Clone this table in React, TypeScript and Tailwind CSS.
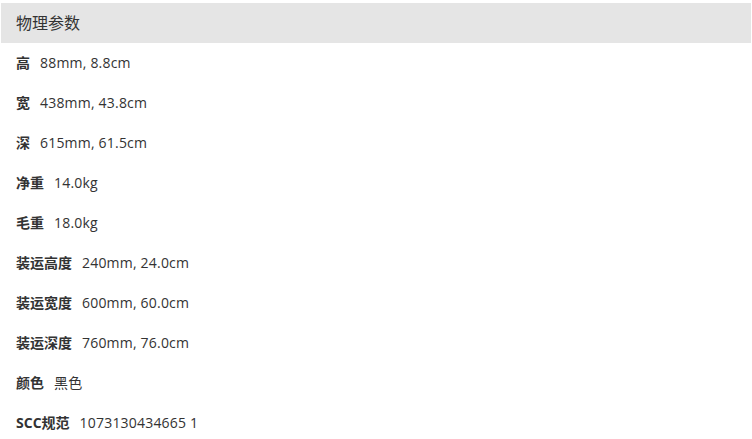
const specs: [string, string][] = [
  ["高", "88mm, 8.8cm"],
  ["宽", "438mm, 43.8cm"],
  ["深", "615mm, 61.5cm"],
  ["净重", "14.0kg"],
  ["毛重", "18.0kg"],
  ["装运高度", "240mm, 24.0cm"],
  ["装运宽度", "600mm, 60.0cm"],
  ["装运深度", "760mm, 76.0cm"],
  ["颜色", "黑色"],
  ["SCC规范", "1073130434665 1"],
];

export default function App() {
  return (
    <div
      className="w-[752px] h-[439px] bg-white pt-[3px] text-[#333]"
      style={{ fontFamily: '"Open Sans", "Noto Sans CJK SC", sans-serif' }}
    >
      <div className="ml-[1px] w-[750px] h-[40px] bg-[#e5e5e5] flex items-center px-[15px] text-[16px]">
        物理参数
      </div>
      <ul>
        {specs.map(([label, value]) => (
          <li key={label} className="h-[40px] flex items-center px-[16px] pb-[2px] text-[14px]">
            <span className="font-bold mr-[10px]">{label}</span>
            <span className="tracking-[0.2px]">{value}</span>
          </li>
        ))}
      </ul>
    </div>
  );
}
